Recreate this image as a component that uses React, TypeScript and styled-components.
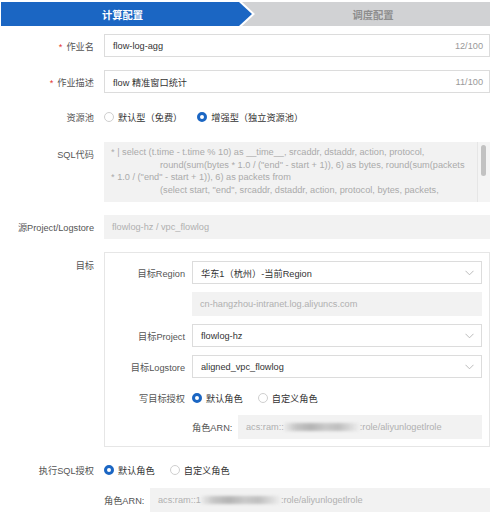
import React from "react";
import styled, { createGlobalStyle } from "styled-components";

const Global = createGlobalStyle`
  html, body { margin: 0; padding: 0; background: #fff; }
  body { font-family: "Liberation Sans", "Noto Sans CJK SC", sans-serif; font-size: 9.2px; color: #333; }
  * { box-sizing: border-box; }
`;

const Page = styled.div`
  width: 500px;
  padding: 2px 10px 0 1px;
  display: flex;
  flex-direction: column;
`;

const Steps = styled.div`
  display: flex;
  height: 24px;
`;

const Step = styled.div<{ $active?: boolean }>`
  display: flex;
  align-items: center;
  justify-content: center;
  font-size: 10.3px;
  font-weight: bold;
  ${(p) =>
    p.$active
      ? `
    width: 251px;
    flex: none;
    background: #1b66c3;
    color: #fff;
    padding-right: 8px;
    clip-path: polygon(0 0, calc(100% - 13px) 0, 100% 50%, calc(100% - 13px) 100%, 0 100%);
    position: relative;
    z-index: 1;
  `
      : `
    flex: 1;
    margin-left: -10px;
    background: #d1d2d4;
    color: #8d8d8d;
    padding-left: 14px;
    clip-path: polygon(0 0, 100% 0, 100% 100%, 0 100%, 13px 50%);
  `}
`;

const Form = styled.div`
  display: flex;
  flex-direction: column;
`;

const Row = styled.div<{ $mt: number; $top?: boolean }>`
  display: grid;
  grid-template-columns: 93px 1fr;
  column-gap: 10px;
  align-items: ${(p) => (p.$top ? "start" : "center")};
  margin-top: ${(p) => p.$mt}px;
`;

const Label = styled.div<{ $pt?: number }>`
  text-align: right;
  color: #555;
  white-space: nowrap;
  padding-top: ${(p) => p.$pt ?? 0}px;
`;

const Req = styled.span`
  color: #e5352b;
  margin-right: 4px;
`;

const Input = styled.div`
  height: 23px;
  border: 1px solid #dcdcdc;
  padding: 0 6px 0 8px;
  display: flex;
  align-items: center;
  justify-content: space-between;
  color: #333;
  background: #fff;
`;

const Counter = styled.span`
  color: #999;
`;

const Select = styled(Input)`
  padding-right: 7px;
`;

const Disabled = styled.div<{ $h?: number }>`
  height: ${(p) => p.$h ?? 24}px;
  background: #f2f2f2;
  color: #b0b0b0;
  padding: 0 8px;
  display: flex;
  align-items: center;
  white-space: nowrap;
  overflow: hidden;
  flex: 1;
`;

const RadioGroup = styled.div`
  display: flex;
  align-items: center;
  gap: 15px;
  height: 16px;
`;

const RadioItem = styled.label`
  display: flex;
  align-items: center;
  gap: 4px;
  color: #333;
`;

const RadioDot = styled.span<{ $on?: boolean }>`
  width: 10px;
  height: 10px;
  border-radius: 50%;
  background: #fff;
  border: ${(p) => (p.$on ? "3px solid #1b66c3" : "1px solid #cfcfcf")};
  flex: none;
`;

const Code = styled.div`
  height: 60px;
  background: #f2f2f2;
  display: flex;
  overflow: hidden;
`;

const CodeText = styled.div`
  flex: 1;
  padding: 4px 0 0 7px;
  color: #aaa;
  line-height: 12.7px;
  white-space: pre;
  overflow: hidden;
`;

const CodeLine = styled.div<{ $indent?: boolean }>`
  padding-left: ${(p) => (p.$indent ? 49 : 0)}px;
`;

const ScrollTrack = styled.div`
  width: 13px;
  flex: none;
  border-left: 1px solid #e6e6e6;
  background: #f4f4f4;
  padding: 3px 0 0 3px;
`;

const Thumb = styled.div`
  width: 5px;
  height: 31px;
  border-radius: 3px;
  background: #c2c2c2;
`;

const Panel = styled.div`
  border: 1px solid #e6e6e6;
  padding: 8px 7px 7px 0;
  display: flex;
  flex-direction: column;
`;

const SubRow = styled.div<{ $mt: number }>`
  display: grid;
  grid-template-columns: 80px 1fr;
  column-gap: 7px;
  align-items: center;
  margin-top: ${(p) => p.$mt}px;
`;

const SubLabel = styled.div`
  text-align: right;
  color: #555;
  white-space: nowrap;
`;

const ArnRow = styled.div`
  display: flex;
  align-items: center;
  gap: 5px;
`;

const ArnLabel = styled.span`
  width: 41px;
  flex: none;
  color: #555;
  white-space: nowrap;
`;

const Blur = styled.span<{ $w: number }>`
  display: inline-block;
  width: ${(p) => p.$w}px;
  height: 8px;
  flex: none;
  filter: blur(1.6px);
  background: linear-gradient(
    90deg,
    rgba(220, 220, 220, 0.3) 0%,
    #c6c6c6 15%,
    #b4b4b4 35%,
    #c9c9c9 55%,
    #bfbfbf 72%,
    #dadada 88%,
    rgba(235, 235, 235, 0.3) 100%
  );
`;

const Chevron = () => (
  <svg width="9" height="6" viewBox="0 0 9 6" style={{ flex: "none" }}>
    <path d="M0.5 0.8 L4.5 4.8 L8.5 0.8" fill="none" stroke="#b3b3b3" strokeWidth="0.9" />
  </svg>
);

const Radio = ({ on, children }: { on?: boolean; children: React.ReactNode }) => (
  <RadioItem>
    <RadioDot $on={on} />
    {children}
  </RadioItem>
);

export default function App() {
  return (
    <>
      <Global />
      <Page>
        <Steps>
          <Step $active>计算配置</Step>
          <Step>调度配置</Step>
        </Steps>
        <Form>
          <Row $mt={8}>
            <Label>
              <Req>*</Req>作业名
            </Label>
            <Input>
              <span>flow-log-agg</span>
              <Counter>12/100</Counter>
            </Input>
          </Row>
          <Row $mt={13}>
            <Label>
              <Req>*</Req>作业描述
            </Label>
            <Input>
              <span>flow 精准窗口统计</span>
              <Counter>11/100</Counter>
            </Input>
          </Row>
          <Row $mt={16}>
            <Label>资源池</Label>
            <RadioGroup>
              <Radio>默认型（免费）</Radio>
              <Radio on>增强型（独立资源池）</Radio>
            </RadioGroup>
          </Row>
          <Row $mt={17} $top>
            <Label $pt={5}>SQL代码</Label>
            <Code>
              <CodeText>
                <CodeLine>* | select (t.time - t.time % 10) as __time__, srcaddr, dstaddr, action, protocol,</CodeLine>
                <CodeLine $indent>round(sum(bytes * 1.0 / ("end" - start + 1)), 6) as bytes, round(sum(packets</CodeLine>
                <CodeLine>* 1.0 / ("end" - start + 1)), 6) as packets from</CodeLine>
                <CodeLine $indent>(select start, "end", srcaddr, dstaddr, action, protocol, bytes, packets,</CodeLine>
              </CodeText>
              <ScrollTrack>
                <Thumb />
              </ScrollTrack>
            </Code>
          </Row>
          <Row $mt={13}>
            <Label>源Project/Logstore</Label>
            <Disabled>flowlog-hz / vpc_flowlog</Disabled>
          </Row>
          <Row $mt={13} $top>
            <Label $pt={6}>目标</Label>
            <Panel>
              <SubRow $mt={0}>
                <SubLabel>目标Region</SubLabel>
                <Select>
                  <span>华东1（杭州）-当前Region</span>
                  <Chevron />
                </Select>
              </SubRow>
              <SubRow $mt={8}>
                <span />
                <Disabled>cn-hangzhou-intranet.log.aliyuncs.com</Disabled>
              </SubRow>
              <SubRow $mt={8}>
                <SubLabel>目标Project</SubLabel>
                <Select>
                  <span>flowlog-hz</span>
                  <Chevron />
                </Select>
              </SubRow>
              <SubRow $mt={8}>
                <SubLabel>目标Logstore</SubLabel>
                <Select>
                  <span>aligned_vpc_flowlog</span>
                  <Chevron />
                </Select>
              </SubRow>
              <SubRow $mt={12}>
                <SubLabel>写目标授权</SubLabel>
                <RadioGroup>
                  <Radio on>默认角色</Radio>
                  <Radio>自定义角色</Radio>
                </RadioGroup>
              </SubRow>
              <SubRow $mt={9}>
                <span />
                <ArnRow>
                  <ArnLabel>角色ARN:</ArnLabel>
                  <Disabled>
                    acs:ram::
                    <Blur $w={76} />
                    :role/aliyunlogetlrole
                  </Disabled>
                </ArnRow>
              </SubRow>
            </Panel>
          </Row>
          <Row $mt={15}>
            <Label>执行SQL授权</Label>
            <RadioGroup>
              <Radio on>默认角色</Radio>
              <Radio>自定义角色</Radio>
            </RadioGroup>
          </Row>
          <Row $mt={10}>
            <span />
            <ArnRow>
              <ArnLabel>角色ARN:</ArnLabel>
              <Disabled>
                acs:ram::1
                <Blur $w={80} />
                :role/aliyunlogetlrole
              </Disabled>
            </ArnRow>
          </Row>
        </Form>
      </Page>
    </>
  );
}
